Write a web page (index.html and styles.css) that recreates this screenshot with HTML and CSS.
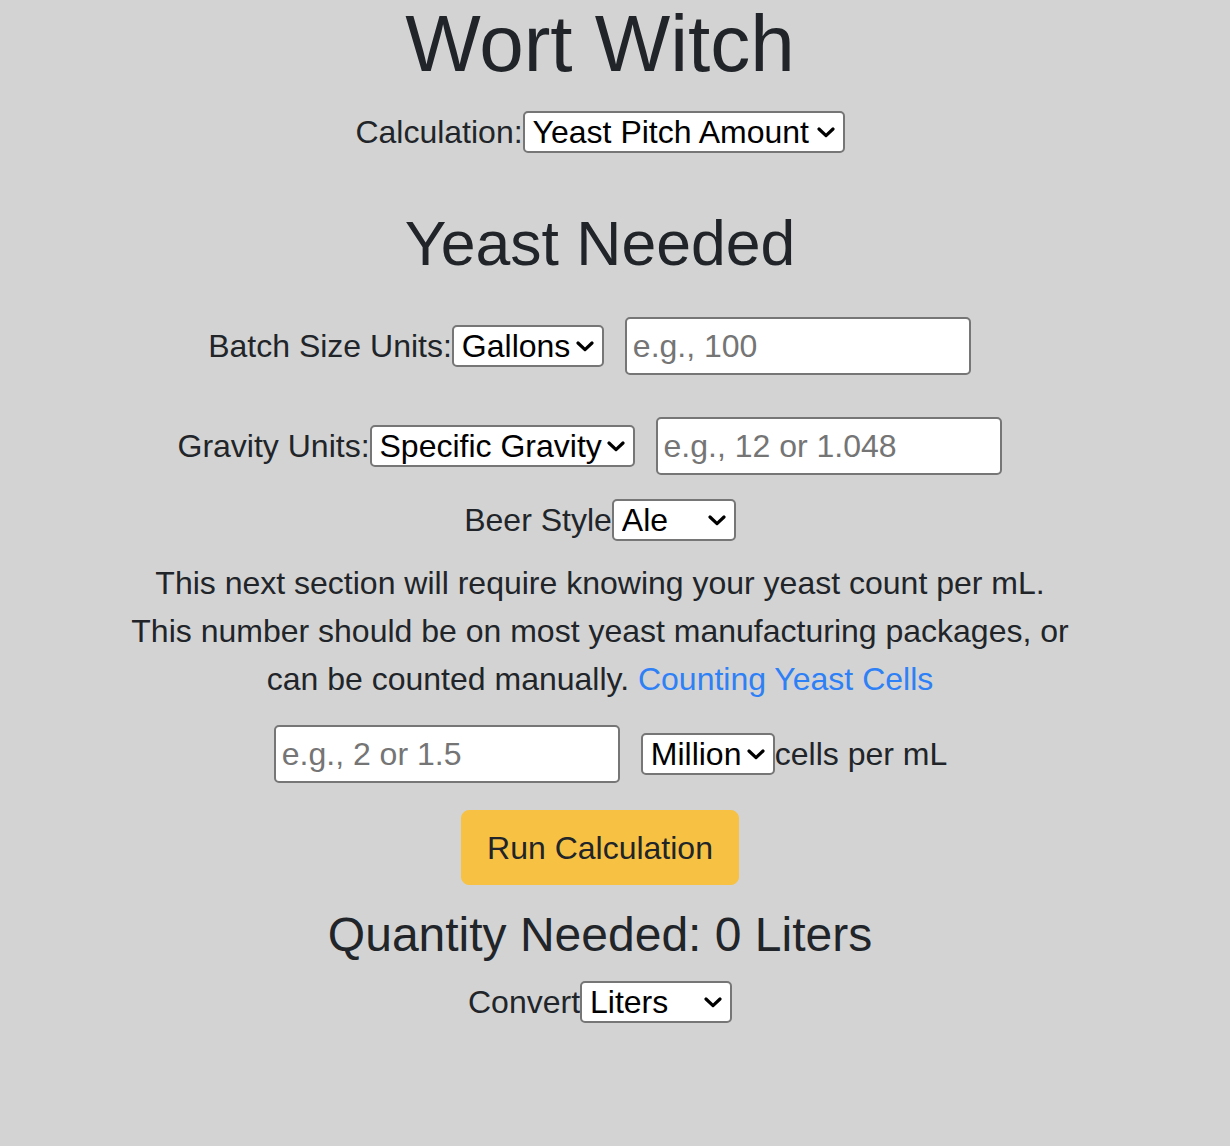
FILE: index.html
```html
<!DOCTYPE html>
<html lang="en">
<head>
<meta charset="utf-8">
<title>Wort Witch</title>
<link rel="stylesheet" href="styles.css">
</head>
<body>
<div class="page">
  <h1 class="title">Wort Witch</h1>
  <div class="row row-calc">
    <label class="lbl" for="calc">Calculation:</label>
    <select id="calc" class="sel sel-calc"><option>Yeast Pitch Amount</option></select>
  </div>

  <h2 class="section-title">Yeast Needed</h2>

  <div class="row row-batch">
    <label class="lbl" for="bunits">Batch Size Units:</label>
    <select id="bunits" class="sel sel-gallons"><option>Gallons</option></select>
    <input class="inp" type="text" placeholder="e.g., 100">
  </div>

  <div class="row row-gravity">
    <label class="lbl" for="gunits">Gravity Units:</label>
    <select id="gunits" class="sel sel-gravity"><option>Specific Gravity</option></select>
    <input class="inp" type="text" placeholder="e.g., 12 or 1.048">
  </div>

  <div class="row row-style">
    <label class="lbl" for="bstyle">Beer Style</label>
    <select id="bstyle" class="sel sel-ale"><option>Ale</option></select>
  </div>

  <p class="note">This next section will require knowing your yeast count per mL. This number should be on most yeast manufacturing packages, or can be counted manually. <a class="link" href="#">Counting Yeast Cells</a></p>

  <div class="row row-cells">
    <input class="inp" type="text" placeholder="e.g., 2 or 1.5">
    <select class="sel sel-million"><option>Million</option></select>
    <span class="lbl">cells per mL</span>
  </div>

  <div class="row row-btn">
    <button class="btn-run" type="button">Run Calculation</button>
  </div>

  <h3 class="result">Quantity Needed: 0 Liters</h3>

  <div class="row row-convert">
    <label class="lbl" for="conv">Convert</label>
    <select id="conv" class="sel sel-liters"><option>Liters</option></select>
  </div>
</div>
</body>
</html>
```
FILE: styles.css
```css
html, body {
  margin: 0;
  padding: 0;
  background: #d3d3d3;
}

body {
  font-family: "Liberation Sans", Arial, Helvetica, sans-serif;
  color: #212529;
  font-size: 32px;
  min-height: 1146px;
}

.page {
  width: 1200px;
  text-align: center;
}

.title {
  margin: 0;
  font-size: 80px;
  font-weight: 400;
  line-height: 88px;
  height: 88px;
}

.row {
  display: flex;
  justify-content: center;
  align-items: center;
}

.lbl {
  font-size: 32px;
  line-height: 42px;
  color: #212529;
  white-space: nowrap;
}

.sel {
  -webkit-appearance: none;
  appearance: none;
  box-sizing: border-box;
  height: 42px;
  margin: 0;
  padding: 0 30px 0 8px;
  font-family: "Liberation Sans", Arial, Helvetica, sans-serif;
  font-size: 32px;
  color: #000;
  text-align: left;
  background-color: #fff;
  background-image: url("data:image/svg+xml,%3Csvg xmlns='http://www.w3.org/2000/svg' width='18' height='11' viewBox='0 0 18 11'%3E%3Cpath d='M2 2 L9 8.6 L16 2' fill='none' stroke='%23000' stroke-width='3.2' stroke-linecap='round' stroke-linejoin='round'/%3E%3C/svg%3E");
  background-repeat: no-repeat;
  background-position: right 8px center;
  border: 2px solid #767676;
  border-radius: 5px;
}

.sel-calc { width: 322px; }
.sel-gallons { width: 152px; }
.sel-gravity { width: 265px; }
.sel-ale { width: 124px; }
.sel-million { width: 134px; }
.sel-liters { width: 152px; }

.inp {
  box-sizing: border-box;
  width: 346px;
  height: 58px;
  margin: 0 21px;
  padding: 0 6px;
  font-family: "Liberation Sans", Arial, Helvetica, sans-serif;
  font-size: 32px;
  color: #000;
  background: #fff;
  border: 2px solid #767676;
  border-radius: 5px;
}

.inp::placeholder {
  color: #757575;
}

.row-calc { margin-top: 23px; height: 42px; }

.section-title {
  margin: 43px 0 0;
  font-size: 62.5px;
  font-weight: 400;
  line-height: 94px;
  height: 94px;
}

.row-batch { margin-top: 27px; height: 58px; }
.row-gravity { margin-top: 42px; height: 58px; }
.row-style { margin-top: 24px; height: 42px; }

.note {
  width: 945px;
  margin: 18px auto 0;
  font-size: 32px;
  line-height: 48px;
}

.link {
  color: #2e80f6;
  text-decoration: none;
}

.row-cells { margin-top: 22px; height: 58px; }

.row-btn { margin-top: 27px; }

.btn-run {
  box-sizing: border-box;
  height: 75px;
  padding: 0 25px;
  font-family: "Liberation Sans", Arial, Helvetica, sans-serif;
  font-size: 32px;
  line-height: 48px;
  color: #212529;
  background: #f7c244;
  border: 1px solid #f7c244;
  border-radius: 8px;
}

.result {
  margin: 21px 0 0;
  font-size: 48px;
  font-weight: 400;
  line-height: 58px;
  height: 58px;
}

.row-convert { margin-top: 17px; height: 42px; }
```
